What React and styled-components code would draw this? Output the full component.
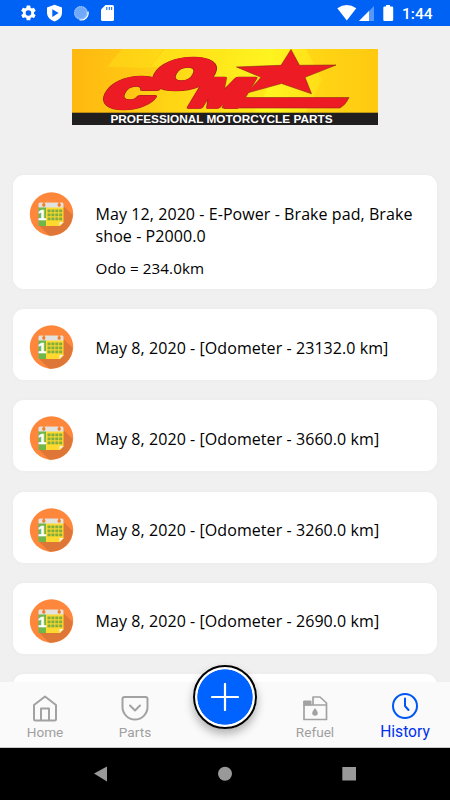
import styled, { createGlobalStyle } from "styled-components";

const GlobalStyle = createGlobalStyle`
  * {
    box-sizing: border-box;
  }

  body {
    margin: 0;
    background: #f0f0f0;
    overflow: hidden;
  }
`;

const Screen = styled.div`
  display: flex;
  flex-direction: column;
  width: 450px;
  height: 800px;
  overflow: hidden;
  background: #f0f0f0;
  font-family: "Open Sans", "Noto Sans", sans-serif;
`;

const StatusBar = styled.header`
  display: flex;
  flex: none;
  justify-content: space-between;
  height: 26px;
  padding: 0 17.5px 0 20px;
  background: #0062f4;
  color: #fff;
`;

const StatusGroup = styled.div`
  display: flex;
  align-items: center;
`;

const Clock = styled.span`
  margin-left: 8px;
  padding-top: 2px;
  font: 500 15.5px/20px Roboto, sans-serif;
`;

const Main = styled.main`
  flex: 1;
  min-height: 0;
  padding: 23px 13px 0;
  overflow: hidden;
`;

const Logo = styled.svg`
  display: block;
  width: 306px;
  height: 76px;
  margin: 0 auto 50px 59px;
`;

const CardList = styled.div`
  display: flex;
  flex-direction: column;
  gap: 20.2px;
`;

const Card = styled.article`
  display: flex;
  flex: none;
  align-items: flex-start;
  height: ${(props) => (props.$tall ? "114px" : "71px")};
  padding: ${(props) => (props.$tall ? "16.5px" : "16px")} 16px 0;
  border-radius: 11px;
  background: #fff;
  box-shadow: 0 0 3px 1px #ececec;

  svg {
    flex: none;
  }
`;

const CardText = styled.div`
  flex: 1;
  min-width: 0;
  padding: 11.6px 0 0 21.6px;
  color: #000;
  font-size: 16px;
  letter-spacing: 0.07px;
  line-height: 22px;

  p {
    margin: 0;
    white-space: pre;
  }

  p + p {
    margin-top: 10px;
    font-size: 15.2px;
  }
`;

const TabBar = styled.nav`
  position: relative;
  display: grid;
  flex: none;
  grid-template-columns: repeat(5, 1fr);
  height: 66px;
  border-bottom: 1px solid #c9c9c9;
  background: #fafafa;
`;

const Tab = styled.div`
  display: flex;
  flex-direction: column;
  align-items: center;
  padding-top: ${(props) => (props.$active ? "10px" : "12px")};
  color: ${(props) => (props.$active ? "#0057f5" : "#a2a2a2")};

  span {
    margin-top: ${(props) => (props.$active ? "3px" : "2px")};
    color: ${(props) => (props.$active ? "#0030f0" : "#a0a0a0")};
    font: ${(props) => (props.$active ? "15.6px/18px" : "13.6px/16px")} Roboto,
      sans-serif;
  }
`;

const AddButton = styled.button`
  position: absolute;
  top: -17px;
  left: 193px;
  display: grid;
  place-items: center;
  width: 64px;
  height: 64px;
  padding: 0;
  border: 2.5px solid #000;
  border-radius: 50%;
  background: radial-gradient(circle, #0062ff 27.3px, #fff 28px);
  box-shadow: 0 5px 10px rgba(0, 0, 0, 0.3);
`;

const SystemBar = styled.footer`
  display: flex;
  flex: none;
  align-items: center;
  justify-content: center;
  gap: 110px;
  height: 52px;
  background: #000;
  color: #999;

  svg {
    width: 14px;
    height: 16px;
    fill: currentColor;
  }
`;

const entries = [
  {
    title: "May 12, 2020 - E-Power - Brake pad, Brake\nshoe - P2000.0",
    odo: "Odo = 234.0km",
  },
  { title: "May 8, 2020 - [Odometer - 23132.0 km]" },
  { title: "May 8, 2020 - [Odometer - 3660.0 km]" },
  { title: "May 8, 2020 - [Odometer - 3260.0 km]" },
  { title: "May 8, 2020 - [Odometer - 2690.0 km]" },
];

function StatusIcons() {
  return (
    <svg width="96" height="26" viewBox="20 0 96 26" fill="#fff">
      <g transform="translate(19.2 3.7) scale(.77)">
        <path d="M19.14 12.94c.04-.3.06-.61.06-.94s-.02-.64-.07-.94l2.03-1.58a.49.49 0 0 0 .12-.61l-1.92-3.32a.49.49 0 0 0-.59-.22l-2.39.96a7 7 0 0 0-1.62-.94l-.36-2.54a.48.48 0 0 0-.48-.41h-3.84a.47.47 0 0 0-.47.41l-.36 2.54c-.59.24-1.13.57-1.62.94l-2.39-.96a.47.47 0 0 0-.59.22L2.74 8.87a.48.48 0 0 0 .12.61l2.03 1.58a7 7 0 0 0 0 1.88l-2.03 1.58a.49.49 0 0 0-.12.61l1.92 3.32c.12.22.37.29.59.22l2.39-.96c.5.38 1.03.7 1.62.94l.36 2.54c.05.24.24.41.48.41h3.84c.24 0 .44-.17.47-.41l.36-2.54a7 7 0 0 0 1.62-.94l2.39.96c.22.08.47 0 .59-.22l1.92-3.32a.47.47 0 0 0-.12-.61zM12 15.6a3.6 3.6 0 1 1 0-7.2 3.6 3.6 0 0 1 0 7.2z" />
      </g>
      <path d="M54.5 4.7 62 7.4v5.2c0 4.2-2.8 7.3-7.5 9-4.7-1.7-7.5-4.8-7.5-9V7.4z" />
      <path d="m52.3 9.2 6.3 3.8-6.3 3.9z" fill="#0062f4" />
      <circle cx="81" cy="13" r="7" fill="#70a9fa" />
      <circle
        cx="80.6"
        cy="12.6"
        r="6"
        fill="none"
        stroke="#b6d4ff"
        strokeDasharray="1 1"
      />
      <path
        d="M88 11.5a7 7 0 0 1-8.4 8.3"
        fill="none"
        stroke="#fff"
        strokeWidth="1.2"
      />
      <path d="M105.5 5h7A1.5 1.5 0 0 1 114 6.5v13a1.5 1.5 0 0 1-1.5 1.5h-10a1.5 1.5 0 0 1-1.5-1.5V9.5z" />
      <path d="M106.8 7v3M109.3 7v3M111.7 7v3" stroke="#0062f4" />
    </svg>
  );
}

function SignalIcons() {
  return (
    <svg width="58" height="26" viewBox="337 0 58 26" fill="#fff">
      <path d="M338.3 8.2Q347.8 1.7 357.3 8.2L347.8 20.5z" />
      <path d="M375 6v15h-15z" opacity=".34" />
      <path d="M370 11v10h-10z" />
      <path d="M387 5h4v1.5h2q1.2 0 1.2 1.2v12q0 1.3-1.2 1.3h-7.5q-1.2 0-1.2-1.3v-12q0-1.2 1.2-1.2h1.5z" />
    </svg>
  );
}

function LogoMark({ stroke, strokeWidth }) {
  return (
    <g
      fill="#ed1c24"
      stroke={stroke}
      strokeWidth={strokeWidth}
      strokeLinejoin="round"
      fontFamily="Inter, 'Liberation Sans', sans-serif"
      fontWeight="900"
      fontSize="42"
    >
      <text transform="translate(98 107.5) skewX(-27) scale(1.66 .98)">C</text>
      <text transform="translate(147 88.5) skewX(-27) scale(1.84 .98)">O</text>
      <text transform="translate(187 107) skewX(-31) scale(1.32 .93)">M</text>
    </g>
  );
}

function BrandLogo() {
  return (
    <Logo viewBox="72 49 306 76">
      <defs>
        <linearGradient id="gold">
          <stop offset="0" stopColor="#ffb810" />
          <stop offset=".25" stopColor="#ffcc14" />
          <stop offset=".45" stopColor="#ffe61a" />
          <stop offset=".65" stopColor="#fff41f" />
          <stop offset=".8" stopColor="#ffe018" />
          <stop offset="1" stopColor="#ffcc12" />
        </linearGradient>
      </defs>
      <rect x="72" y="49" width="306" height="76" fill="url(#gold)" />
      <path d="m122 49-15 18 42 1 14-19z" fill="#ffe51a" opacity=".4" />
      <path d="m165 49-15 18h70l8-18z" fill="#ffe719" opacity=".6" />
      <path d="m151 79 20 34h83l20-36z" fill="#ffd512" opacity=".4" />
      <path d="m306 49 16 31-17 33h73V49z" fill="#ffc60e" opacity=".4" />
      <LogoMark stroke="#8c2916" strokeWidth="4" />
      <g fill="#ed1c24" stroke="#8c2916" strokeWidth=".6">
        <path d="M226 97.5h123q-3 7-9 10.500H222z" />
        <path d="m291 49.500 8.500 15.800 36.500-.3-31 12.300 6.500 16.500-30-10.300-34.500 9.500 14-15.700-24.500-10.300 44.500-1.700z" />
      </g>
      <LogoMark stroke="#ed1c24" strokeWidth="3.2" />
      <rect x="72" y="112.7" width="306" height="12.3" fill="#211e20" />
      <text
        x="110.5"
        y="122.6"
        fill="#fff"
        fontFamily="Liberation Sans, sans-serif"
        fontSize="11"
        fontWeight="700"
        textLength="222"
        lengthAdjust="spacingAndGlyphs"
      >
        PROFESSIONAL MOTORCYCLE PARTS
      </text>
    </Logo>
  );
}

function CalendarIcon() {
  return (
    <svg width="45" height="44" viewBox="0 0 45 44">
      <circle cx="22.5" cy="22" r="21.7" fill="#ff873b" />
      <path
        d="M34.5 14 43.6 23A21.7 21.7 0 0 1 20 43.6L10.5 34z"
        fill="#de7637"
      />
      <path d="M9.5 15H17v19H9.500z" fill="#6fb64b" />
      <path d="M17 15h17.500v15.500L31 34H17z" fill="#ffd930" />
      <path
        d="M9.5 12q0-1.500 1.500-1.500h22q1.500 0 1.500 1.500v3.500h-25z"
        fill="#e2e2df"
      />
      <path d="M30.500 34v-4h4z" fill="#f7f2df" />
      <g fill="#7fae3c">
        {[17.5, 21.5, 25.5].map((y) =>
          [18.5, 22.4, 26.3, 30.2].map((x) => (
            <rect key={`${x}-${y}`} x={x} y={y} width="3" height="2.8" />
          ))
        )}
      </g>
      <path
        d="M14.8 9.500v4M30.200 9.500v4"
        stroke="#ff8b37"
        strokeWidth="1.8"
        strokeLinecap="round"
      />
      <circle cx="14.8" cy="13" r="1.7" fill="#f47e2c" />
      <circle cx="30.2" cy="13" r="1.7" fill="#f47e2c" />
      <text
        x="9"
        y="28.2"
        fill="#fff"
        stroke="#fff"
        strokeWidth=".5"
        fontFamily="Liberation Sans, sans-serif"
        fontSize="15"
        fontWeight="700"
      >
        1
      </text>
    </svg>
  );
}

function TabIcon({ children }) {
  return (
    <svg
      width="28"
      height="28"
      viewBox="0 0 28 28"
      fill="none"
      stroke="currentColor"
      strokeWidth="2"
      strokeLinecap="round"
      strokeLinejoin="round"
    >
      {children}
    </svg>
  );
}

export default function App() {
  return (
    <Screen>
      <GlobalStyle />
      <StatusBar>
        <StatusGroup>
          <StatusIcons />
        </StatusGroup>
        <StatusGroup>
          <SignalIcons />
          <Clock>1:44</Clock>
        </StatusGroup>
      </StatusBar>
      <Main>
        <BrandLogo />
        <CardList>
          {entries.map((entry) => (
            <Card key={entry.title} $tall={Boolean(entry.odo)}>
              <CalendarIcon />
              <CardText>
                <p>{entry.title}</p>
                {entry.odo && <p>{entry.odo}</p>}
              </CardText>
            </Card>
          ))}
          <Card />
        </CardList>
      </Main>
      <TabBar>
        <Tab>
          <TabIcon>
            <path d="M14 2.5 3 11V25q0 1.5 1.5 1.5h19q1.5 0 1.5-1.5V11zM10 26.500v-12h8v12" />
          </TabIcon>
          <span>Home</span>
        </Tab>
        <Tab>
          <TabIcon>
            <path d="M3.5 3h21q2 0 2 2v8a12.500 12.500 0 0 1-25 0V5q0-2 2-2zM9 11.500l5 5 5-5" />
          </TabIcon>
          <span>Parts</span>
        </Tab>
        <div />
        <Tab>
          <TabIcon>
            <path
              d="M3 11h22.500v14.500H3zM12 11V3h7l6.500 6v2"
              strokeWidth="1.7"
            />
            <path d="M3 7h7v4H3z" fill="currentColor" strokeWidth="1" />
            <path
              d="M14 14q-2.800 3.700-2.800 5a2.800 2.800 0 0 0 5.600 0q0-1.300-2.800-5z"
              fill="currentColor"
              stroke="none"
            />
          </TabIcon>
          <span>Refuel</span>
        </Tab>
        <Tab $active>
          <TabIcon>
            <circle cx="14" cy="14" r="12" />
            <path d="M14 6.500V14l3.500 4" />
          </TabIcon>
          <span>History</span>
        </Tab>
        <AddButton aria-label="Add">
          <svg width="28" height="28" viewBox="0 0 28 28">
            <path
              d="M14 1v26M1 14h26"
              stroke="#fff"
              strokeWidth="2.2"
              strokeLinecap="round"
            />
          </svg>
        </AddButton>
      </TabBar>
      <SystemBar>
        <svg viewBox="0 0 14 16">
          <path d="M0 7.500 13 .5v15z" />
        </svg>
        <svg viewBox="0 0 14 16">
          <circle cx="7" cy="7.700" r="7" />
        </svg>
        <svg viewBox="0 0 14 16">
          <path d="M.3 1H14v13.500H.3z" />
        </svg>
      </SystemBar>
    </Screen>
  );
}
